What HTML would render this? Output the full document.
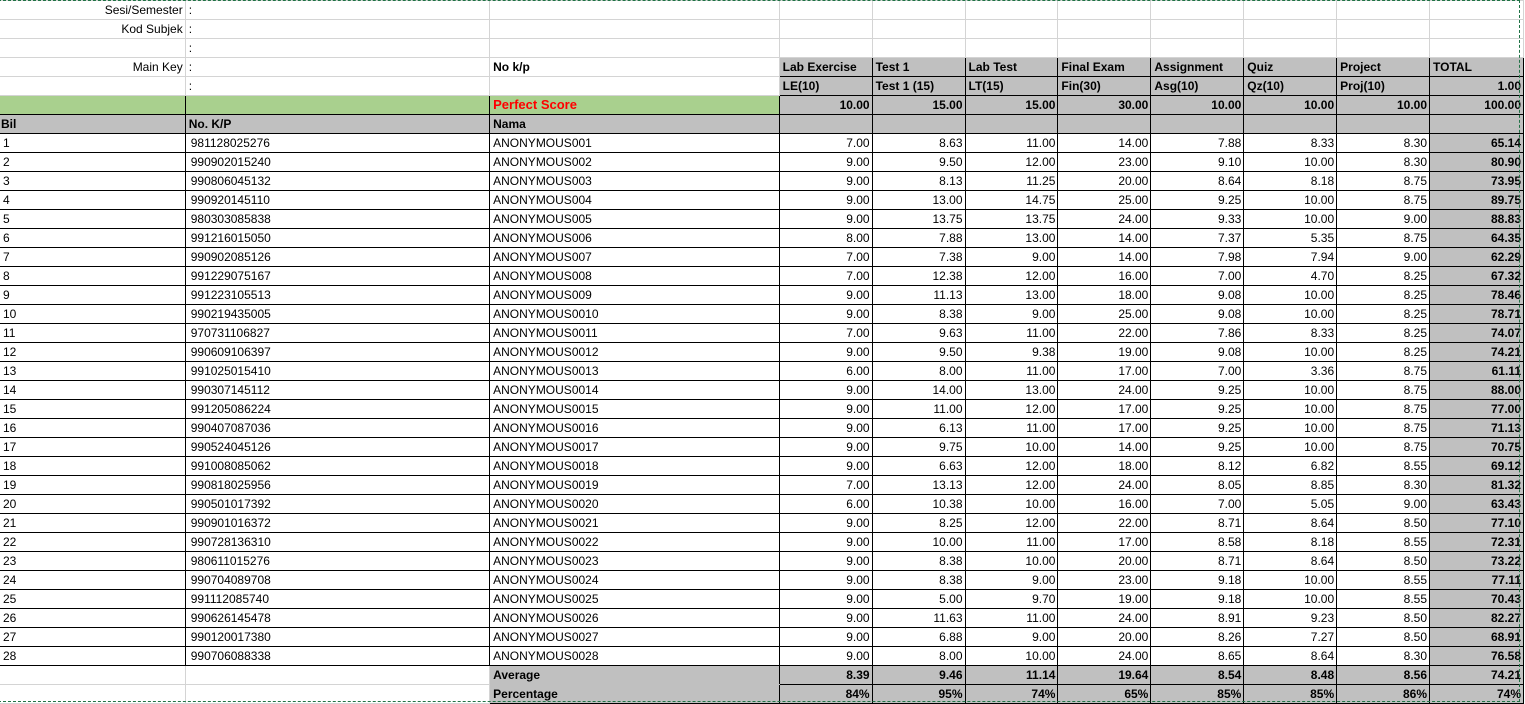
<!DOCTYPE html>
<html><head><meta charset="utf-8"><style>
body{margin:0;background:#fff;width:1525px;height:702px;overflow:hidden;position:relative;font-family:"Liberation Sans",Arial,sans-serif;font-size:12px;color:#000}
table{border-collapse:collapse;table-layout:fixed;position:absolute;left:-1px;top:0}
td{height:18px;padding:0 2px 0 3px;border:1px solid #d4d4d4;white-space:nowrap;overflow:hidden;line-height:18px}
td.r{text-align:right}
.k td{border-color:#000}
.g{background:#c0c0c0}
.gr{background:#a9d08e}
.b{font-weight:bold}
td.kb{border-color:#000}
.dash{position:absolute;left:-2px;top:0;width:1521px;height:700px;border:1px dashed #217346;border-left:none;pointer-events:none}
.t td:nth-child(11){background:#c0c0c0;font-weight:bold}
.t td:nth-child(2){padding-left:5px}
</style></head><body>
<table>
<colgroup><col style="width:186px"><col style="width:305px"><col style="width:290px"><col style="width:93px"><col style="width:93px"><col style="width:93px"><col style="width:93px"><col style="width:93px"><col style="width:93px"><col style="width:93px"><col style="width:94px"></colgroup>
<tr><td class="r">Sesi/Semester</td><td>:</td><td></td><td></td><td></td><td></td><td></td><td></td><td></td><td></td><td></td></tr>
<tr><td class="r">Kod Subjek</td><td>:</td><td></td><td></td><td></td><td></td><td></td><td></td><td></td><td></td><td></td></tr>
<tr><td></td><td>:</td><td></td><td></td><td></td><td></td><td></td><td></td><td></td><td></td><td></td></tr>
<tr><td class="r">Main Key</td><td>:</td><td class="b">No k/p</td><td class="g b kb">Lab Exercise</td><td class="g b kb">Test 1</td><td class="g b kb">Lab Test</td><td class="g b kb">Final Exam</td><td class="g b kb">Assignment</td><td class="g b kb">Quiz</td><td class="g b kb">Project</td><td class="g b kb">TOTAL</td></tr>
<tr><td></td><td>:</td><td></td><td class="g b kb">LE(10)</td><td class="g b kb">Test 1 (15)</td><td class="g b kb">LT(15)</td><td class="g b kb">Fin(30)</td><td class="g b kb">Asg(10)</td><td class="g b kb">Qz(10)</td><td class="g b kb">Proj(10)</td><td class="g b kb r">1.00</td></tr>
<tr class="k b"><td class="gr"></td><td class="gr"></td><td class="gr" style="color:#f00;font-size:13px">Perfect Score</td><td class="g r">10.00</td><td class="g r">15.00</td><td class="g r">15.00</td><td class="g r">30.00</td><td class="g r">10.00</td><td class="g r">10.00</td><td class="g r">10.00</td><td class="g r">100.00</td></tr>
<tr class="k b g"><td style="padding-left:1px">Bil</td><td>No. K/P</td><td>Nama</td><td></td><td></td><td></td><td></td><td></td><td></td><td></td><td></td></tr>
<tbody class="k t">
<tr><td>1</td><td>981128025276</td><td>ANONYMOUS001</td><td class="r">7.00</td><td class="r">8.63</td><td class="r">11.00</td><td class="r">14.00</td><td class="r">7.88</td><td class="r">8.33</td><td class="r">8.30</td><td class="r">65.14</td></tr>
<tr><td>2</td><td>990902015240</td><td>ANONYMOUS002</td><td class="r">9.00</td><td class="r">9.50</td><td class="r">12.00</td><td class="r">23.00</td><td class="r">9.10</td><td class="r">10.00</td><td class="r">8.30</td><td class="r">80.90</td></tr>
<tr><td>3</td><td>990806045132</td><td>ANONYMOUS003</td><td class="r">9.00</td><td class="r">8.13</td><td class="r">11.25</td><td class="r">20.00</td><td class="r">8.64</td><td class="r">8.18</td><td class="r">8.75</td><td class="r">73.95</td></tr>
<tr><td>4</td><td>990920145110</td><td>ANONYMOUS004</td><td class="r">9.00</td><td class="r">13.00</td><td class="r">14.75</td><td class="r">25.00</td><td class="r">9.25</td><td class="r">10.00</td><td class="r">8.75</td><td class="r">89.75</td></tr>
<tr><td>5</td><td>980303085838</td><td>ANONYMOUS005</td><td class="r">9.00</td><td class="r">13.75</td><td class="r">13.75</td><td class="r">24.00</td><td class="r">9.33</td><td class="r">10.00</td><td class="r">9.00</td><td class="r">88.83</td></tr>
<tr><td>6</td><td>991216015050</td><td>ANONYMOUS006</td><td class="r">8.00</td><td class="r">7.88</td><td class="r">13.00</td><td class="r">14.00</td><td class="r">7.37</td><td class="r">5.35</td><td class="r">8.75</td><td class="r">64.35</td></tr>
<tr><td>7</td><td>990902085126</td><td>ANONYMOUS007</td><td class="r">7.00</td><td class="r">7.38</td><td class="r">9.00</td><td class="r">14.00</td><td class="r">7.98</td><td class="r">7.94</td><td class="r">9.00</td><td class="r">62.29</td></tr>
<tr><td>8</td><td>991229075167</td><td>ANONYMOUS008</td><td class="r">7.00</td><td class="r">12.38</td><td class="r">12.00</td><td class="r">16.00</td><td class="r">7.00</td><td class="r">4.70</td><td class="r">8.25</td><td class="r">67.32</td></tr>
<tr><td>9</td><td>991223105513</td><td>ANONYMOUS009</td><td class="r">9.00</td><td class="r">11.13</td><td class="r">13.00</td><td class="r">18.00</td><td class="r">9.08</td><td class="r">10.00</td><td class="r">8.25</td><td class="r">78.46</td></tr>
<tr><td>10</td><td>990219435005</td><td>ANONYMOUS0010</td><td class="r">9.00</td><td class="r">8.38</td><td class="r">9.00</td><td class="r">25.00</td><td class="r">9.08</td><td class="r">10.00</td><td class="r">8.25</td><td class="r">78.71</td></tr>
<tr><td>11</td><td>970731106827</td><td>ANONYMOUS0011</td><td class="r">7.00</td><td class="r">9.63</td><td class="r">11.00</td><td class="r">22.00</td><td class="r">7.86</td><td class="r">8.33</td><td class="r">8.25</td><td class="r">74.07</td></tr>
<tr><td>12</td><td>990609106397</td><td>ANONYMOUS0012</td><td class="r">9.00</td><td class="r">9.50</td><td class="r">9.38</td><td class="r">19.00</td><td class="r">9.08</td><td class="r">10.00</td><td class="r">8.25</td><td class="r">74.21</td></tr>
<tr><td>13</td><td>991025015410</td><td>ANONYMOUS0013</td><td class="r">6.00</td><td class="r">8.00</td><td class="r">11.00</td><td class="r">17.00</td><td class="r">7.00</td><td class="r">3.36</td><td class="r">8.75</td><td class="r">61.11</td></tr>
<tr><td>14</td><td>990307145112</td><td>ANONYMOUS0014</td><td class="r">9.00</td><td class="r">14.00</td><td class="r">13.00</td><td class="r">24.00</td><td class="r">9.25</td><td class="r">10.00</td><td class="r">8.75</td><td class="r">88.00</td></tr>
<tr><td>15</td><td>991205086224</td><td>ANONYMOUS0015</td><td class="r">9.00</td><td class="r">11.00</td><td class="r">12.00</td><td class="r">17.00</td><td class="r">9.25</td><td class="r">10.00</td><td class="r">8.75</td><td class="r">77.00</td></tr>
<tr><td>16</td><td>990407087036</td><td>ANONYMOUS0016</td><td class="r">9.00</td><td class="r">6.13</td><td class="r">11.00</td><td class="r">17.00</td><td class="r">9.25</td><td class="r">10.00</td><td class="r">8.75</td><td class="r">71.13</td></tr>
<tr><td>17</td><td>990524045126</td><td>ANONYMOUS0017</td><td class="r">9.00</td><td class="r">9.75</td><td class="r">10.00</td><td class="r">14.00</td><td class="r">9.25</td><td class="r">10.00</td><td class="r">8.75</td><td class="r">70.75</td></tr>
<tr><td>18</td><td>991008085062</td><td>ANONYMOUS0018</td><td class="r">9.00</td><td class="r">6.63</td><td class="r">12.00</td><td class="r">18.00</td><td class="r">8.12</td><td class="r">6.82</td><td class="r">8.55</td><td class="r">69.12</td></tr>
<tr><td>19</td><td>990818025956</td><td>ANONYMOUS0019</td><td class="r">7.00</td><td class="r">13.13</td><td class="r">12.00</td><td class="r">24.00</td><td class="r">8.05</td><td class="r">8.85</td><td class="r">8.30</td><td class="r">81.32</td></tr>
<tr><td>20</td><td>990501017392</td><td>ANONYMOUS0020</td><td class="r">6.00</td><td class="r">10.38</td><td class="r">10.00</td><td class="r">16.00</td><td class="r">7.00</td><td class="r">5.05</td><td class="r">9.00</td><td class="r">63.43</td></tr>
<tr><td>21</td><td>990901016372</td><td>ANONYMOUS0021</td><td class="r">9.00</td><td class="r">8.25</td><td class="r">12.00</td><td class="r">22.00</td><td class="r">8.71</td><td class="r">8.64</td><td class="r">8.50</td><td class="r">77.10</td></tr>
<tr><td>22</td><td>990728136310</td><td>ANONYMOUS0022</td><td class="r">9.00</td><td class="r">10.00</td><td class="r">11.00</td><td class="r">17.00</td><td class="r">8.58</td><td class="r">8.18</td><td class="r">8.55</td><td class="r">72.31</td></tr>
<tr><td>23</td><td>980611015276</td><td>ANONYMOUS0023</td><td class="r">9.00</td><td class="r">8.38</td><td class="r">10.00</td><td class="r">20.00</td><td class="r">8.71</td><td class="r">8.64</td><td class="r">8.50</td><td class="r">73.22</td></tr>
<tr><td>24</td><td>990704089708</td><td>ANONYMOUS0024</td><td class="r">9.00</td><td class="r">8.38</td><td class="r">9.00</td><td class="r">23.00</td><td class="r">9.18</td><td class="r">10.00</td><td class="r">8.55</td><td class="r">77.11</td></tr>
<tr><td>25</td><td>991112085740</td><td>ANONYMOUS0025</td><td class="r">9.00</td><td class="r">5.00</td><td class="r">9.70</td><td class="r">19.00</td><td class="r">9.18</td><td class="r">10.00</td><td class="r">8.55</td><td class="r">70.43</td></tr>
<tr><td>26</td><td>990626145478</td><td>ANONYMOUS0026</td><td class="r">9.00</td><td class="r">11.63</td><td class="r">11.00</td><td class="r">24.00</td><td class="r">8.91</td><td class="r">9.23</td><td class="r">8.50</td><td class="r">82.27</td></tr>
<tr><td>27</td><td>990120017380</td><td>ANONYMOUS0027</td><td class="r">9.00</td><td class="r">6.88</td><td class="r">9.00</td><td class="r">20.00</td><td class="r">8.26</td><td class="r">7.27</td><td class="r">8.50</td><td class="r">68.91</td></tr>
<tr><td>28</td><td>990706088338</td><td>ANONYMOUS0028</td><td class="r">9.00</td><td class="r">8.00</td><td class="r">10.00</td><td class="r">24.00</td><td class="r">8.65</td><td class="r">8.64</td><td class="r">8.30</td><td class="r">76.58</td></tr>
</tbody>
<tr class="b"><td></td><td></td><td class="g kb" style="border-bottom-color:#c0c0c0">Average</td><td class="g kb r">8.39</td><td class="g kb r">9.46</td><td class="g kb r">11.14</td><td class="g kb r">19.64</td><td class="g kb r">8.54</td><td class="g kb r">8.48</td><td class="g kb r">8.56</td><td class="g kb r">74.21</td></tr>
<tr class="b"><td></td><td></td><td class="g kb" style="border-top-color:#c0c0c0">Percentage</td><td class="g kb r">84%</td><td class="g kb r">95%</td><td class="g kb r">74%</td><td class="g kb r">65%</td><td class="g kb r">85%</td><td class="g kb r">85%</td><td class="g kb r">86%</td><td class="g kb r">74%</td></tr>
</table>
<div class="dash"></div>
</body></html>
